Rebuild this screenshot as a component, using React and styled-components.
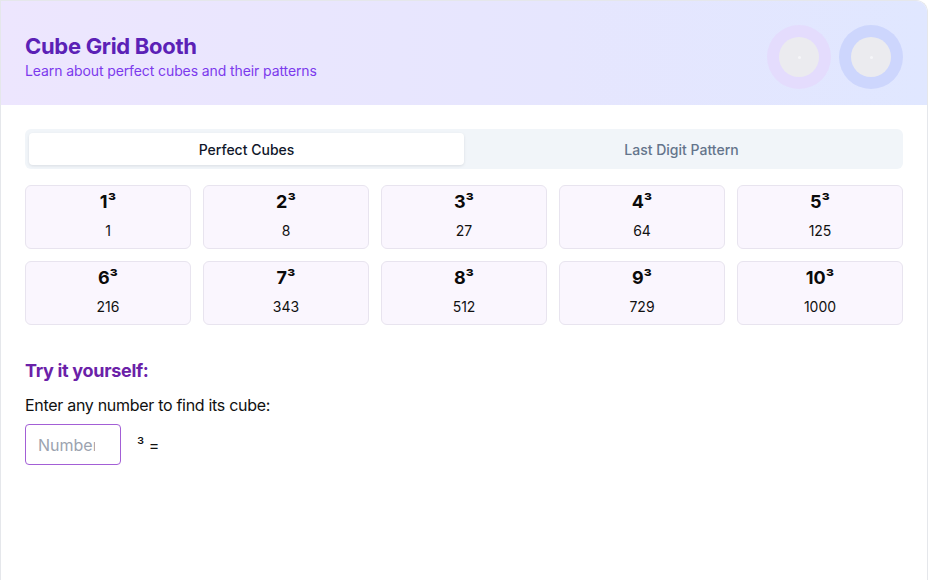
import React, { useState } from "react";
import styled, { createGlobalStyle } from "styled-components";

const GlobalStyle = createGlobalStyle`
  html, body { margin: 0; padding: 0; background: #ffffff; }
  body { font-family: Inter, "Noto Sans", "Liberation Sans", sans-serif; color: #111827; }
  * { box-sizing: border-box; }
`;

const Card = styled.div`
  min-height: 100vh;
  background: #ffffff;
  border: 1px solid #e5e7eb;
  border-bottom: 0;
  border-radius: 0 12px 0 0;
  overflow: hidden;
`;

const Header = styled.header`
  height: 104px;
  display: flex;
  align-items: flex-start;
  justify-content: space-between;
  padding: 24px 24px 0;
  background: linear-gradient(90deg, #ede6fe 0%, #e6e6fe 60%, #e0e7ff 100%);
`;

const TitleBlock = styled.div`
  display: flex;
  flex-direction: column;
  padding-top: 6px;
`;

const Title = styled.h1`
  margin: 0;
  font-size: 22px;
  line-height: 30px;
  font-weight: 700;
  letter-spacing: -0.3px;
  color: #5b21b6;
`;

const Subtitle = styled.p`
  margin: 0;
  font-size: 14px;
  line-height: 20px;
  letter-spacing: -0.1px;
  color: #7c3aed;
`;

const Badges = styled.div`
  display: flex;
  gap: 8px;
`;

const Ring = styled.div`
  width: 64px;
  height: 64px;
  border-radius: 50%;
  background: ${(p) => p.$tone};
  display: flex;
  align-items: center;
  justify-content: center;
`;

const Core = styled.div`
  width: 40px;
  height: 40px;
  border-radius: 50%;
  background: #ebebef;
  display: flex;
  align-items: center;
  justify-content: center;
  &::after {
    content: "";
    width: 3px;
    height: 3px;
    border-radius: 50%;
    background: #f6f6f8;
  }
`;

const Body = styled.main`
  padding: 24px 24px;
`;

const TabList = styled.div`
  display: grid;
  grid-template-columns: 1fr 1fr;
  height: 40px;
  padding: 4px;
  border-radius: 6px;
  background: #f1f5f9;
`;

const Tab = styled.button`
  border: 0;
  border-radius: 4px;
  font-family: inherit;
  font-size: 14px;
  font-weight: 500;
  cursor: pointer;
  background: ${(p) => (p.$active ? "#ffffff" : "transparent")};
  color: ${(p) => (p.$active ? "#0f172a" : "#64748b")};
  box-shadow: ${(p) => (p.$active ? "0 1px 3px rgba(15, 23, 42, 0.1)" : "none")};
`;

const CubeGrid = styled.div`
  display: grid;
  grid-template-columns: repeat(5, 1fr);
  gap: 12px;
  margin-top: 16px;
`;

const CubeCard = styled.div`
  height: 64px;
  padding: 6px 8px;
  border: 1px solid #e8e4ef;
  border-radius: 6px;
  background: #faf6fe;
  display: flex;
  flex-direction: column;
  align-items: center;
`;

const Power = styled.div`
  font-size: 18px;
  line-height: 20px;
  font-weight: 700;
  color: #0a0a0a;
`;

const Value = styled.div`
  margin-top: 9px;
  font-size: 14px;
  line-height: 20px;
  color: #111111;
`;

const TryHeading = styled.h2`
  margin: 32px 0 0;
  font-size: 18px;
  line-height: 28px;
  font-weight: 700;
  letter-spacing: -0.3px;
  color: #6b21a8;
`;

const Prompt = styled.p`
  margin: 8px 0 0;
  font-size: 16px;
  line-height: 24px;
  letter-spacing: -0.3px;
  color: #111111;
`;

const InputRow = styled.div`
  display: flex;
  align-items: center;
  gap: 16px;
  margin-top: 7px;
`;

const NumberInput = styled.input`
  width: 96px;
  height: 41px;
  padding: 0 10px 0 12px;
  border: 1px solid #a35fd6;
  border-radius: 4px;
  font-family: inherit;
  font-size: 16px;
  color: #111111;
  outline: none;
  &::placeholder { color: #9ca3af; }
`;

const Result = styled.span`
  font-size: 16px;
  color: #111111;
`;

const cubes = [1, 2, 3, 4, 5, 6, 7, 8, 9, 10];

export default function App() {
  const [tab, setTab] = useState("cubes");
  const [num, setNum] = useState("");
  const n = parseFloat(num);
  const result = num !== "" && !Number.isNaN(n) ? n * n * n : "";

  return (
    <>
      <GlobalStyle />
      <Card>
        <Header>
          <TitleBlock>
            <Title>Cube Grid Booth</Title>
            <Subtitle>Learn about perfect cubes and their patterns</Subtitle>
          </TitleBlock>
          <Badges>
            <Ring $tone="#e4dcfd">
              <Core />
            </Ring>
            <Ring $tone="#cdd6fd">
              <Core />
            </Ring>
          </Badges>
        </Header>
        <Body>
          <TabList>
            <Tab $active={tab === "cubes"} onClick={() => setTab("cubes")}>
              Perfect Cubes
            </Tab>
            <Tab $active={tab === "digits"} onClick={() => setTab("digits")}>
              Last Digit Pattern
            </Tab>
          </TabList>
          <CubeGrid>
            {cubes.map((c) => (
              <CubeCard key={c}>
                <Power>{c}³</Power>
                <Value>{c * c * c}</Value>
              </CubeCard>
            ))}
          </CubeGrid>
          <TryHeading>Try it yourself:</TryHeading>
          <Prompt>Enter any number to find its cube:</Prompt>
          <InputRow>
            <NumberInput
              type="number"
              placeholder="Number"
              value={num}
              onChange={(e) => setNum(e.target.value)}
            />
            <Result>³ = {result}</Result>
          </InputRow>
        </Body>
      </Card>
    </>
  );
}
